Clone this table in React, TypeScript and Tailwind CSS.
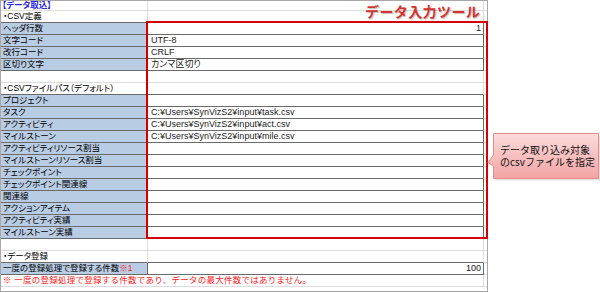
import React from "react";

type Row = {
  k: "p" | "c" | "title" | "note";
  label?: React.ReactNode;
  value?: string;
  right?: boolean;
  db?: boolean;
};

const P = "C:¥Users¥SynVizS2¥input¥";

const rows: Row[] = [
  { k: "title" },
  { k: "p", label: "・CSV定義", db: true },
  { k: "c", label: "ヘッダ行数", value: "1", right: true },
  { k: "c", label: "文字コード", value: "UTF-8" },
  { k: "c", label: "改行コード", value: "CRLF" },
  { k: "c", label: "区切り文字", value: "カンマ区切り" },
  { k: "p" },
  { k: "p", label: "・CSVファイルパス（デフォルト）", db: true },
  { k: "c", label: "プロジェクト" },
  { k: "c", label: "タスク", value: P + "task.csv" },
  { k: "c", label: "アクティビティ", value: P + "act.csv" },
  { k: "c", label: "マイルストーン", value: P + "mile.csv" },
  { k: "c", label: "アクティビティリソース割当" },
  { k: "c", label: "マイルストーンリソース割当" },
  { k: "c", label: "チェックポイント" },
  { k: "c", label: "チェックポイント関連線" },
  { k: "c", label: "関連線" },
  { k: "c", label: "アクションアイテム" },
  { k: "c", label: "アクティビティ実績" },
  { k: "c", label: "マイルストーン実績" },
  { k: "p" },
  { k: "p", label: "・データ登録", db: true },
  {
    k: "c",
    label: (
      <>
        一度の登録処理で登録する件数<span className="text-[#ff1a1a]">※1</span>
      </>
    ),
    value: "100",
    right: true,
  },
  { k: "note" },
];

function SheetRow({ r }: { r: Row }) {
  if (r.k === "title") {
    return (
      <div className="flex h-[10px]">
        <div className="w-[147px] border-r border-b border-[#dcdcdc] pl-[1px] text-[8.5px] leading-[9px] font-bold text-[#2a2ae6]">
          【データ取込】
        </div>
        <div className="w-[336px] border-r border-b border-[#dcdcdc]" />
        <div className="flex-1 border-b border-[#dcdcdc]" />
      </div>
    );
  }
  if (r.k === "note") {
    return (
      <div className="flex h-[12px]">
        <div className="w-[483px] border-r border-b border-[#dcdcdc] pl-[2px] flex items-center text-[8.5px] leading-[11px] text-[#ff2020] tracking-[0.25px] [font-feature-settings:normal]">
          ※ 一度の登録処理で登録する件数であり、データの最大件数ではありません。
        </div>
        <div className="flex-1 border-b border-[#dcdcdc]" />
      </div>
    );
  }
  if (r.k === "c") {
    return (
      <div className="flex h-[12px]">
        <div className="w-[147px] bg-[#b8cce4] border-r border-b border-[#6a6a6a] pl-[2px] flex items-center text-[8.5px] leading-[11px] text-black">
          {r.label}
        </div>
        <div
          className={
            r.right
              ? "w-[336px] border-r border-b border-[#6a6a6a] pr-[2px] flex items-center justify-end text-[9px] leading-[11px] text-[#1a1a1a]"
              : "w-[336px] border-r border-b border-[#6a6a6a] pl-[3px] flex items-center text-[9px] leading-[11px] text-[#1a1a1a]"
          }
        >
          {r.value}
        </div>
        <div className="flex-1 border-b border-[#dcdcdc]" />
      </div>
    );
  }
  return (
    <div className="flex h-[12px]">
      <div
        className={
          r.db
            ? "w-[147px] border-r border-r-[#dcdcdc] border-b border-b-[#6a6a6a] pl-[2px] flex items-center text-[8.5px] leading-[11px] text-black whitespace-nowrap"
            : "w-[147px] border-r border-b border-[#dcdcdc] pl-[2px] flex items-center text-[8.5px] leading-[11px] text-black whitespace-nowrap"
        }
      >
        {r.label}
      </div>
      <div
        className={
          r.db
            ? "w-[336px] border-r border-r-[#dcdcdc] border-b border-b-[#6a6a6a]"
            : "w-[336px] border-r border-b border-[#dcdcdc]"
        }
      />
      <div className="flex-1 border-b border-[#dcdcdc]" />
    </div>
  );
}

export default function App() {
  return (
    <div className="relative w-[600px] h-[293px] bg-white overflow-hidden font-['Liberation_Sans','Noto_Sans_CJK_JP',sans-serif] [font-feature-settings:'palt']">
      <div className="w-[488px] h-[292px] border border-[#a8a8a8] flex flex-col">
        {rows.map((r, i) => (
          <SheetRow key={i} r={r} />
        ))}
        <div className="flex-1" />
      </div>

      {/* Title text box */}
      <div className="absolute left-[365px] top-[2px] text-[14px] leading-[18px] tracking-[0.4px] font-bold text-[#d8322e] [font-feature-settings:normal] [text-shadow:1px_1px_1px_rgba(0,0,0,0.25)] font-['Noto_Sans_CJK_JP',sans-serif]">
        データ入力ツール
      </div>

      {/* Red frame */}
      <div className="absolute left-[146px] top-[21px] w-[342px] h-[218px] border-2 border-[#d40000]" />

      {/* Callout */}
      <svg className="absolute left-[486px] top-[131px]" width="114" height="52" viewBox="486 131 114 52">
        <defs>
          <linearGradient id="cg" x1="0" y1="0" x2="0" y2="1">
            <stop offset="0" stopColor="#fcdcdc" />
            <stop offset="1" stopColor="#f3a3a3" />
          </linearGradient>
        </defs>
        <path
          d="M495 135.5 H600 V180.5 H495 Z"
          fill="#000"
          opacity="0.12"
        />
        <path
          d="M493.5 133.5 H598.5 V178.5 H493.5 V166 L488 162.5 L493.5 155 Z"
          fill="url(#cg)"
          stroke="#e68c8c"
          strokeWidth="1"
        />
      </svg>
      <div className="absolute left-[500px] top-[144px] text-[10px] leading-[12px] text-[#111] whitespace-nowrap font-['Noto_Sans_CJK_JP',sans-serif] [font-feature-settings:normal]">
        <div>データ取り込み対象</div>
        <div>のcsvファイルを指定</div>
      </div>
    </div>
  );
}
